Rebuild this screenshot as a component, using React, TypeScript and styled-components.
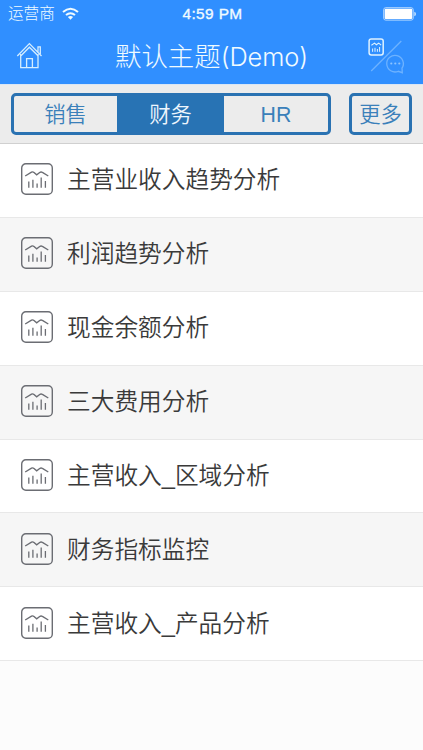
import React from "react";
import styled, { createGlobalStyle } from "styled-components";

const GlobalStyle = createGlobalStyle`
  * { box-sizing: border-box; }
  body {
    margin: 0;
    background: #fcfcfc;
    font-family: "Liberation Sans", "Noto Sans CJK SC", sans-serif;
  }
`;

const Screen = styled.div`
  width: 423px;
  height: 750px;
  display: flex;
  flex-direction: column;
  overflow: hidden;
  background: #fcfcfc;
`;

const Header = styled.header`
  height: 84px;
  flex: none;
  background: #308fff;
  color: #f0fbff;
`;

const StatusBar = styled.div`
  height: 28px;
  display: grid;
  grid-template-columns: 1fr auto 1fr;
  align-items: center;
  padding: 0 6px 0 8px;
`;

const Carrier = styled.div`
  display: flex;
  align-items: center;
  gap: 7px;
  font-size: 15.6px;
  font-weight: 300;
  line-height: 28px;
`;

const Clock = styled.div`
  font-size: 15.4px;
  font-weight: 500;
  letter-spacing: 0.4px;
  -webkit-text-stroke: 0.35px currentColor;
`;

const BatterySlot = styled.div`
  display: flex;
  justify-content: flex-end;
`;

const NavBar = styled.div`
  height: 56px;
  display: grid;
  grid-template-columns: 60px 1fr 60px;
`;

const NavButton = styled.button`
  border: 0;
  padding: 0;
  background: none;
  color: inherit;
  display: block;
`;

const Title = styled.h1`
  margin: 0;
  padding-top: 2px;
  font-size: 26.4px;
  font-weight: 300;
  line-height: 54px;
  text-align: center;
  white-space: nowrap;
`;

const TitleSuffix = styled.span`
  font-family: "Inter", "Liberation Sans", sans-serif;
  font-size: 25.4px;
  letter-spacing: -0.1px;
`;

const Toolbar = styled.div`
  height: 60px;
  flex: none;
  display: flex;
  gap: 18px;
  padding: 8px 11px 0;
  background: #ececec;
  border-top: 1px solid #d9e6f5;
  border-bottom: 1px solid #d0d0d0;
`;

const Segments = styled.div`
  width: 320px;
  height: 42px;
  display: grid;
  grid-template-columns: 103px 107px 1fr;
  border: 3px solid #2a72b2;
  border-radius: 5px;
  overflow: hidden;
`;

const Segment = styled.button<{ $active?: boolean }>`
  border: 0;
  padding: 2px 0 0;
  font-family: inherit;
  font-size: 21.3px;
  font-weight: 350;
  line-height: 34px;
  background: ${(p) => (p.$active ? "#2873b4" : "transparent")};
  color: ${(p) => (p.$active ? "#eef6fd" : "#3a80ba")};
`;

const MoreButton = styled(Segment)`
  width: 63px;
  height: 42px;
  border: 3px solid #2a72b2;
  border-radius: 5px;
`;

const List = styled.ul`
  margin: 0;
  padding: 0;
  list-style: none;
`;

const Row = styled.li`
  height: 73.9px;
  display: flex;
  align-items: center;
  gap: 14px;
  padding: 0 0 2px 21px;
  border-bottom: 1px solid #e8e8e8;
  background: #fff;
  color: #3a3a3a;
  font-size: 23.7px;
  font-weight: 350;
  line-height: 36px;
  &:nth-child(even) { background: #f6f6f6; }
`;

const Label = styled.span`
  padding-top: 2px;
  white-space: nowrap;
`;

const ChartIcon = () => (
  <svg width="32" height="32" viewBox="0 0 32 32" fill="none" stroke="#6b6d73">
    <rect x="0.7" y="0.7" width="30.6" height="30.6" rx="4.2" strokeWidth="1.4" />
    <path d="M4.2 13 L10.5 9.1 Q11.8 8.5 13 9.5 L15.7 11.8 L18.7 9.5 Q20 8.5 21.4 9.4 L27.3 13" strokeWidth="1.4" />
    <path d="M7.8 18.5V24.7M11.9 16.8V24.7M16.1 20.5V24.7M20.2 14.5V24.7M24.4 18V24.7" strokeWidth="1.3" />
  </svg>
);

const WifiIcon = () => (
  <svg width="17" height="14" viewBox="0 0 17 14" fill="none" stroke="#f0fbff" strokeWidth="2">
    <path d="M1 5.1Q8.5 -1.6 16 5.1M4 8.1Q8.5 4.3 13 8.1" />
    <path d="M5.9 10Q8.5 8 11.1 10L8.5 12.7Z" fill="#f0fbff" stroke="none" />
  </svg>
);

const BatteryIcon = () => (
  <svg width="34" height="14" viewBox="0 0 34 14">
    <rect x="0.7" y="0.7" width="29.5" height="12.4" rx="2" fill="none" stroke="#b4d8ff" strokeWidth="1" />
    <rect x="1.7" y="1.7" width="27.5" height="10.4" rx="1" fill="#fff" />
    <path d="M31.3 4.7Q33 5 33 7T31.3 9.3Z" fill="#c9e4ff" />
  </svg>
);

const HomeIcon = () => (
  <svg width="60" height="56" viewBox="0 28 60 56" fill="none" stroke="#d5eeff" strokeWidth="1.3">
    <path d="M17.3 56L29.4 43.6L41.5 56M20.7 54V67.7H38V54M38 51.8V46.8H40.3V54" />
    <path d="M21 55.7L29.4 47.2L38 55.7M26.6 67.5V58.6H32.4V67.5" />
  </svg>
);

const ModeIcon = () => (
  <svg width="60" height="56" viewBox="363 28 60 56" fill="none">
    <g stroke="#dff2ff">
      <rect x="369.1" y="38.9" width="14.1" height="16.1" rx="2.2" strokeWidth="1.5" />
      <path d="M371.4 45.2L374.5 43.1L376.4 44.7L378.7 43.1L381.2 45.2" strokeWidth="1.1" />
      <path d="M372.6 48.5V51.8M375 47.8V51.8M377.4 49V51.8M379.6 47V51.8" strokeWidth="1" />
    </g>
    <path d="M371.2 71L401.3 41" stroke="#6db2ff" strokeWidth="1.3" />
    <path d="M398.3 71.3A8.3 8.3 0 1 1 402 68.2L402.3 72.7Z" stroke="#6db2ff" strokeWidth="1.3" />
    <g fill="#8cc3ff">
      <circle cx="391.3" cy="63.5" r="1.1" />
      <circle cx="395.3" cy="63.5" r="1.1" />
      <circle cx="399.3" cy="63.5" r="1.1" />
    </g>
  </svg>
);

const reports = [
  "主营业收入趋势分析",
  "利润趋势分析",
  "现金余额分析",
  "三大费用分析",
  "主营收入_区域分析",
  "财务指标监控",
  "主营收入_产品分析",
];

export default function App() {
  return (
    <Screen>
      <GlobalStyle />
      <Header>
        <StatusBar>
          <Carrier>运营商<WifiIcon /></Carrier>
          <Clock>4:59 PM</Clock>
          <BatterySlot><BatteryIcon /></BatterySlot>
        </StatusBar>
        <NavBar>
          <NavButton aria-label="主页"><HomeIcon /></NavButton>
          <Title>默认主题<TitleSuffix>(Demo)</TitleSuffix></Title>
          <NavButton aria-label="切换"><ModeIcon /></NavButton>
        </NavBar>
      </Header>
      <Toolbar>
        <Segments>
          <Segment>销售</Segment>
          <Segment $active>财务</Segment>
          <Segment>HR</Segment>
        </Segments>
        <MoreButton>更多</MoreButton>
      </Toolbar>
      <List>
        {reports.map((name) => (
          <Row key={name}>
            <ChartIcon />
            <Label>{name}</Label>
          </Row>
        ))}
      </List>
    </Screen>
  );
}
